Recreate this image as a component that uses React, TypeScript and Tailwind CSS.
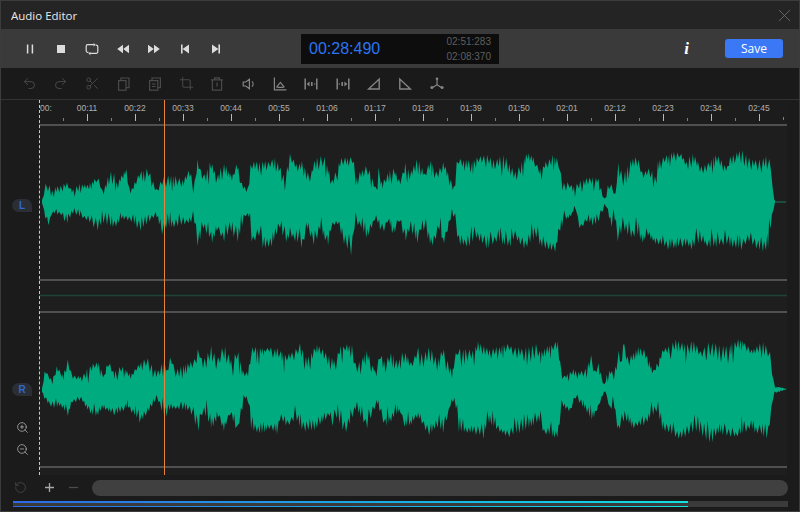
import { Crop, Redo2, RotateCcw, Scissors, Undo2, X, ZoomIn, ZoomOut } from "lucide-react";
import type { ReactNode } from "react";

type Pt = [number, number];

const LTop: Pt[] = [[42,200],[45,187],[48,177],[51,192],[55,188],[67,183],[72,190],[78,185],[88,185],[98,177],[103,192],[107,180],[113,170],[117,185],[126,168],[130,192],[140,172],[148,170],[157,190],[163,177],[173,177],[183,180],[190,170],[194,187],[197,160],[203,177],[211,162],[217,177],[223,163],[232,177],[237,163],[243,187],[248,188],[251,162],[260,163],[270,162],[275,158],[285,178],[290,155],[297,167],[302,162],[310,178],[315,158],[325,158],[332,182],[340,160],[350,158],[353,157],[356,178],[367,165],[372,178],[377,192],[379,163],[382,183],[392,167],[401,182],[405,162],[410,175],[417,158],[425,175],[430,159],[437,175],[443,162],[448,173],[454,188],[457,159],[473,162],[477,158],[487,155],[493,162],[503,155],[515,173],[528,153],[533,157],[540,170],[553,155],[560,163],[562,188],[565,180],[573,187],[580,182],[588,178],[598,178],[605,200],[608,185],[612,185],[615,200],[618,162],[623,177],[630,162],[637,157],[643,175],[650,167],[655,178],[658,162],[668,155],[680,153],[687,163],[692,153],[702,168],[717,155],[727,168],[730,157],[742,150],[747,158],[757,162],[767,157],[771,162],[772,185],[775,200]];
const LBot: Pt[] = [[42,203],[45,217],[49,226],[52,213],[62,215],[66,226],[72,213],[82,217],[88,220],[97,230],[103,222],[115,227],[122,218],[132,222],[140,230],[147,223],[156,215],[162,233],[167,227],[180,225],[194,220],[198,247],[203,227],[212,242],[217,230],[225,243],[230,227],[237,244],[245,215],[249,217],[251,242],[260,235],[263,247],[272,245],[280,227],[285,243],[290,235],[302,247],[307,228],[315,246],[320,228],[328,245],[331,227],[337,223],[345,245],[352,255],[355,222],[362,227],[367,238],[376,217],[382,235],[388,220],[393,235],[400,220],[405,243],[410,228],[417,243],[422,227],[432,246],[440,228],[443,245],[452,215],[456,220],[458,243],[470,246],[475,235],[487,248],[497,240],[510,247],[515,235],[523,249],[537,235],[540,245],[555,251],[561,227],[565,220],[572,215],[575,205],[580,230],[588,220],[593,225],[600,220],[605,203],[612,227],[613,207],[618,242],[623,228],[632,238],[637,232],[642,242],[648,235],[655,243],[663,245],[668,248],[687,245],[692,248],[700,240],[710,247],[725,243],[742,249],[747,240],[762,251],[768,248],[772,217],[775,202]];
const RTop: Pt[] = [[42,388],[45,370],[52,380],[57,367],[63,375],[68,360],[72,375],[82,377],[88,368],[98,362],[104,377],[108,358],[113,372],[122,367],[131,375],[138,365],[147,358],[157,373],[166,358],[167,372],[171,355],[175,370],[187,365],[197,357],[198,348],[203,363],[211,347],[217,360],[224,345],[232,363],[237,348],[243,372],[248,373],[251,347],[263,350],[270,347],[278,350],[287,357],[300,345],[307,360],[317,345],[323,350],[335,362],[340,347],[352,345],[356,367],[367,352],[377,375],[379,353],[385,362],[392,353],[398,365],[403,350],[412,365],[418,347],[423,357],[430,347],[437,362],[443,348],[452,373],[457,348],[473,352],[478,343],[490,350],[507,345],[523,350],[537,345],[540,353],[547,347],[558,342],[562,378],[573,370],[578,372],[585,370],[592,355],[595,372],[598,362],[604,387],[608,370],[612,372],[613,382],[618,350],[622,362],[623,340],[628,360],[638,348],[645,350],[653,372],[663,350],[677,340],[683,345],[695,342],[700,353],[708,343],[725,348],[740,340],[752,350],[763,342],[770,353],[773,377],[774,387],[780,387],[787,389]];
const RBot: Pt[] = [[42,392],[45,400],[53,408],[60,405],[68,415],[72,402],[82,400],[88,410],[95,417],[103,408],[115,415],[128,407],[140,422],[148,413],[157,398],[165,418],[170,408],[190,410],[198,432],[203,410],[212,428],[218,417],[224,430],[230,413],[237,432],[245,398],[249,403],[251,428],[260,433],[270,428],[277,433],[280,418],[287,427],[295,418],[303,430],[313,430],[330,415],[333,428],[337,417],[345,433],[356,408],[367,428],[377,402],[385,427],[400,410],[405,428],[418,417],[429,435],[437,425],[443,432],[452,400],[457,410],[458,430],[483,435],[484,443],[487,420],[507,437],[523,430],[540,420],[543,432],[558,437],[562,405],[570,412],[575,398],[585,408],[592,420],[598,408],[605,390],[611,413],[613,397],[618,432],[625,418],[632,427],[643,425],[657,410],[662,428],[680,438],[697,430],[711,443],[717,432],[733,437],[750,428],[767,438],[772,410],[774,393],[780,392],[787,389]];

const rnd = (n: number) => {
  const v = Math.sin(n * 127.1 + 11.7) * 43758.5453;
  return v - Math.floor(v);
};

const yAt = (pts: Pt[], x: number) => {
  for (let s = 0; s < pts.length - 1; s++) {
    const [x0, y0] = pts[s];
    const [x1, y1] = pts[s + 1];
    if (x <= x1) return y0 + ((y1 - y0) * (x - x0)) / (x1 - x0);
  }
  return pts[pts.length - 1][1];
};

// walk one envelope, alternating peaks on it with notches cut toward the centre
const edge = (pts: Pt[], dir: number, seed: number, mid: number) => {
  const out: string[] = [];
  const end = pts[pts.length - 1][0];
  let x = pts[0][0];
  let n = 0;
  while (x < end) {
    const y = yAt(pts, x);
    const size = Math.min(1, Math.abs(y - mid) / 28);
    const notch = n % 2 === 1 ? 3 + 15 * rnd(n + seed) * rnd(n + seed + 7) + 4 * rnd(n + seed + 2) : -2 * rnd(n + seed + 4);
    out.push(`${x.toFixed(1)} ${(y + notch * size * dir).toFixed(1)}`);
    x += 0.8 + 1.4 * rnd(n + seed + 11);
    n++;
  }
  out.push(`${end} ${pts[pts.length - 1][1]}`);
  return out;
};

const wavePath = (top: Pt[], bot: Pt[], seed: number, mid: number) =>
  "M" + edge(top, 1, seed, mid).concat(edge(bot, -1, seed + 900, mid).reverse()).join("L") + "Z";

const Ico = ({ children, w = 16 }: { children: ReactNode; w?: number }) => (
  <svg width={w} height={w} viewBox="0 0 16 16" fill="none" stroke="currentColor" strokeWidth="1.2">
    {children}
  </svg>
);

const transport: ReactNode[] = [
  <Ico key="pause"><path d="M5.6 3.5v9M10.4 3.5v9" strokeWidth="1.5" /></Ico>,
  <Ico key="stop"><rect x="4" y="4" width="8" height="8" fill="currentColor" stroke="none" /></Ico>,
  <Ico key="loop"><path d="M9.8 3.6H3.8a1.6 1.6 0 0 0-1.6 1.6v4.6a1.6 1.6 0 0 0 1.6 1.6h.7M6.2 12.4h6a1.6 1.6 0 0 0 1.6-1.6V5.8a1.6 1.6 0 0 0-1.6-1.6h-.6" /><path d="M9.6 2v3.4l2-1.7zM6.4 10.8v3.4l-2-1.7z" fill="currentColor" stroke="none" /></Ico>,
  <Ico key="rew"><path d="M8 3.8v8.4L2.2 8zM14 3.8v8.4L8.2 8z" fill="currentColor" stroke="none" /></Ico>,
  <Ico key="ffw"><path d="M8 3.8v8.4L13.8 8zM2 3.8v8.4L7.8 8z" fill="currentColor" stroke="none" /></Ico>,
  <Ico key="first"><path d="M4 3.5h1.6v9H4zM12 3.6v8.8L5.6 8z" fill="currentColor" stroke="none" /></Ico>,
  <Ico key="last"><path d="M12 3.5h-1.6v9H12zM4 3.6v8.8L10.4 8z" fill="currentColor" stroke="none" /></Ico>,
];

const tools: { on: boolean; icon: ReactNode }[] = [
  { on: false, icon: <Undo2 size={15} strokeWidth={1.5} /> },
  { on: false, icon: <Redo2 size={15} strokeWidth={1.5} /> },
  { on: false, icon: <Scissors size={15} strokeWidth={1.5} /> },
  { on: false, icon: <Ico><rect x="2.6" y="4.6" width="7.4" height="9.6" /><path d="M5 4.4V2h8v9.6h-2.8" /></Ico> },
  { on: false, icon: <Ico><rect x="2.6" y="4.6" width="8.2" height="9.6" /><path d="M5 4.4V2h8.4v9.6h-2.4M5 8h3.6M5 10.5h3.6" /></Ico> },
  { on: false, icon: <Crop size={15} strokeWidth={1.5} /> },
  { on: false, icon: <Ico><path d="M2 3.8h12M5.6 3.6V1.9h4.8v1.7M3.4 3.8v10.4h9.2V3.8M8 6.6v4" /></Ico> },
  { on: true, icon: <Ico><path d="M2.2 6h2.6l3.6-2.8v9.6L4.8 10H2.2zM11 5.4c1.4 1.4 1.4 3.8 0 5.2" /></Ico> },
  { on: true, icon: <Ico><path d="M2.4 1.6v12.2h12M4.4 11.4l4-5 4 5M5.4 11.4h6" /></Ico> },
  { on: true, icon: <Ico><path d="M2.2 2.6v10.8M13.8 2.6v10.8" strokeWidth="1.5" /><path d="M3.6 8l3-2.6v5.2zM8 6h1.6v4H8zM11 7.4h1.4v1.2H11z" fill="currentColor" stroke="none" /></Ico> },
  { on: true, icon: <Ico><path d="M2.2 2.6v10.8M13.8 2.6v10.8" strokeWidth="1.5" /><path d="M12.4 8l-3-2.6v5.2zM6.4 6h1.6v4H6.4zM3.6 7.4H5v1.2H3.6z" fill="currentColor" stroke="none" /></Ico> },
  { on: true, icon: <Ico><path d="M2.6 13h10.6V3z" strokeWidth="1.4" /></Ico> },
  { on: true, icon: <Ico><path d="M13.4 13H2.8V3z" strokeWidth="1.4" /></Ico> },
  { on: true, icon: <Ico><path d="M8 2.4v6.4M8 8.8l-4.4 2.6M8 8.8l4.4 2.6" /><circle cx="8" cy="2.8" r="1.3" fill="currentColor" stroke="none" /><circle cx="2.9" cy="11.6" r="1.5" fill="currentColor" stroke="none" /><circle cx="13.1" cy="11.6" r="1.5" fill="currentColor" stroke="none" /></Ico> },
];

const stamps = ["00:11", "00:22", "00:33", "00:44", "00:55", "01:06", "01:17", "01:28", "01:39", "01:50", "02:01", "02:12", "02:23", "02:34", "02:45"];

const Channel = ({ label, className }: { label: string; className: string }) => (
  <div className={`flex h-[13px] w-5 items-center justify-center rounded-full rounded-br-none bg-[#2c2e35] text-[10px] font-bold text-[#2f68cf] ${className}`}>
    {label}
  </div>
);

export default function App() {
  return (
    <div className="flex h-[512px] w-[800px] flex-col overflow-hidden border border-[#3c3c3c] bg-[#1b1b1b] font-['Liberation_Sans',sans-serif]">
      {/* Title */}
      <div className="flex h-[28px] shrink-0 items-center justify-between bg-[#242424] pl-[10px] pr-[4px] pt-[2px]">
        <span className="font-['Open_Sans',sans-serif] text-[11.5px] text-[#e8e8e8]">Audio Editor</span>
        <X size={21} strokeWidth={1} className="-translate-y-px text-[#6c6c6c]" />
      </div>

      {/* Transport */}
      <div className="flex h-[39px] shrink-0 items-center bg-[#3a3a3a] pl-[13px] pr-4">
        {transport.map((icon, i) => (
          <div key={i} className="flex w-[31px] justify-center text-[#dcdcdc]">{icon}</div>
        ))}
        <div className="ml-[70px] flex h-[30px] w-[198px] items-center justify-between bg-[#0d0d0d] pl-2 pr-2">
          <span className="text-[16px] text-[#2b74f2]">00:28:490</span>
          <div className="flex flex-col gap-[4px] text-right text-[10px] leading-[11px] text-[#5f5f5f]">
            <span>02:51:283</span>
            <span>02:08:370</span>
          </div>
        </div>
        <span className="ml-auto mr-[36px] font-['Liberation_Serif',serif] text-[17px] font-bold italic text-white">i</span>
        <button className="h-[19px] w-[58px] rounded-[3px] bg-[#3b78f6] font-['Open_Sans',sans-serif] text-[12px] leading-[19px] text-white">Save</button>
      </div>

      {/* Edit tools */}
      <div className="flex h-[32px] shrink-0 items-center border-b border-[#333333] bg-[#1a1a1a] pl-[13px]">
        {tools.map((t, i) => (
          <div key={i} className={`flex w-[31.3px] justify-center ${t.on ? "text-[#858585]" : "text-[#4a4a4a]"}`}>{t.icon}</div>
        ))}
      </div>

      {/* Track area */}
      <div className="flex h-[375px] shrink-0">
        <div className="flex w-[38px] shrink-0 flex-col items-center pl-[4px]">
          <Channel label="L" className="mt-[99px]" />
          <Channel label="R" className="mt-[171px]" />
          <ZoomIn size={13} strokeWidth={1.4} className="mt-[25px] text-[#b4b4b4]" />
          <ZoomOut size={13} strokeWidth={1.4} className="mt-[9px] text-[#b4b4b4]" />
        </div>

        <div className="relative flex w-[748px] shrink-0 flex-col">
          <div className="flex h-[24px] shrink-0 bg-[#1c1c1c]">
            <div className="w-[24px] shrink-0 pl-px pt-[2px] text-[8.5px] leading-[12px] text-[#b0b0b0]">00:</div>
            {stamps.map((s) => (
              <div key={s} className="flex w-[48px] shrink-0 flex-col">
                <span className="pt-[2px] text-center text-[8.5px] leading-[12px] text-[#b0b0b0]">{s}</span>
                <div className="mt-auto mb-[4px] flex items-end">
                  <span className="h-[3px] w-px bg-[#808080]" />
                  <span className="ml-[23px] h-[7px] w-px bg-[#b8b8b8]" />
                </div>
              </div>
            ))}
            <div className="mt-auto mb-[4px] h-[3px] w-px bg-[#808080]" />
          </div>

          <svg width="748" height="351" viewBox="39 124 748 351" className="block bg-[#1e1e1e]">
            <path d="M39 125H787M39 280H787M39 312H787M39 467H787" stroke="#626262" strokeWidth="1.6" />
            <path d="M39 295.5H787" stroke="#1d4536" strokeWidth="1.6" />
            <path d="M775 202H786" stroke="#1a7a5c" strokeWidth="1" />
            <path d={wavePath(LTop, LBot, 1, 202)} fill="#01ab80" />
            <path d={wavePath(RTop, RBot, 4000, 389)} fill="#01ab80" />
          </svg>

          <div className="absolute bottom-0 left-0 top-0 border-l border-dashed border-[#e6cf63]" />
          <div className="absolute bottom-0 left-[125px] top-0 w-px bg-[#e8823c]" />
        </div>
      </div>

      {/* Footer */}
      <div className="flex flex-1 flex-col bg-[#1b1b1b]">
        <div className="flex h-[25px] items-center pl-[13px] pr-[11px]">
          <RotateCcw size={13} strokeWidth={1.4} className="text-[#4c4c4c]" />
          <span className="ml-[15px] flex w-[14px] justify-center text-[#a8a8a8]">
            <svg width="11" height="11" viewBox="0 0 11 11" stroke="currentColor" strokeWidth="1.3"><path d="M5.5 1v9M1 5.5h9" /></svg>
          </span>
          <span className="ml-[10px] flex w-[14px] justify-center text-[#4c4c4c]">
            <svg width="11" height="11" viewBox="0 0 11 11" stroke="currentColor" strokeWidth="1.3"><path d="M1 5.5h9" /></svg>
          </span>
          <div className="ml-[12px] h-[16px] flex-1 rounded-full bg-[#404040]" />
        </div>
        <div className="ml-[12px] mr-[11px] mt-px flex h-[6px] flex-col justify-between bg-[#3a3a3a]">
          <div className="h-[1.5px] w-[675px] bg-gradient-to-r from-[#2e68e6] to-[#10e0e0]" />
          <div className="h-[1.5px] w-[675px] bg-gradient-to-r from-[#2e68e6] to-[#10e0e0]" />
        </div>
      </div>
    </div>
  );
}
